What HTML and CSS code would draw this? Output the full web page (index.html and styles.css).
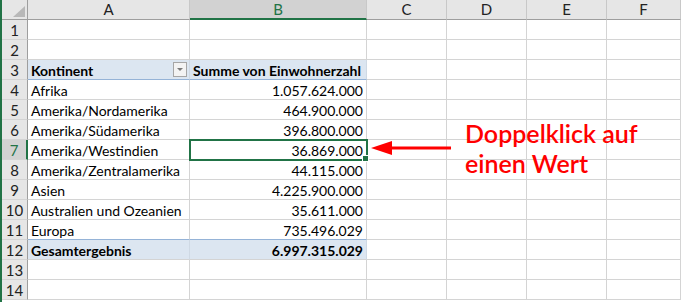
FILE: index.html
```html
<!DOCTYPE html>
<html lang="de">
<head>
  <meta charset="UTF-8">
  <title>Pivot - Einwohnerzahl</title>
  <link rel="stylesheet" href="styles.css">
</head>
<body>
  <div class="sheet">
    <!-- Spaltenköpfe -->
    <div class="corner"><span class="corner-tri"></span></div>
    <div class="col-head">A</div>
    <div class="col-head active">B</div>
    <div class="col-head">C</div>
    <div class="col-head">D</div>
    <div class="col-head">E</div>
    <div class="col-head">F</div>

    <div class="row-head">1</div><div class="cell"></div><div class="cell"></div><div class="cell"></div><div class="cell"></div><div class="cell"></div><div class="cell"></div>
    <div class="row-head">2</div><div class="cell"></div><div class="cell"></div><div class="cell"></div><div class="cell"></div><div class="cell"></div><div class="cell"></div>

    <div class="row-head">3</div>
    <div class="cell pivot-head label">Kontinent<span class="filter-btn"></span></div>
    <div class="cell pivot-head">Summe von Einwohnerzahl</div>
    <div class="cell"></div><div class="cell"></div><div class="cell"></div><div class="cell"></div>

    <div class="row-head">4</div><div class="cell">Afrika</div><div class="cell num">1.057.624.000</div><div class="cell"></div><div class="cell"></div><div class="cell"></div><div class="cell"></div>
    <div class="row-head">5</div><div class="cell">Amerika/Nordamerika</div><div class="cell num">464.900.000</div><div class="cell"></div><div class="cell"></div><div class="cell"></div><div class="cell"></div>
    <div class="row-head">6</div><div class="cell">Amerika/Südamerika</div><div class="cell num">396.800.000</div><div class="cell"></div><div class="cell"></div><div class="cell"></div><div class="cell"></div>
    <div class="row-head active">7</div><div class="cell">Amerika/Westindien</div><div class="cell num selected">36.869.000<span class="fill-handle"></span></div><div class="cell"></div><div class="cell"></div><div class="cell"></div><div class="cell"></div>
    <div class="row-head">8</div><div class="cell">Amerika/Zentralamerika</div><div class="cell num">44.115.000</div><div class="cell"></div><div class="cell"></div><div class="cell"></div><div class="cell"></div>
    <div class="row-head">9</div><div class="cell">Asien</div><div class="cell num">4.225.900.000</div><div class="cell"></div><div class="cell"></div><div class="cell"></div><div class="cell"></div>
    <div class="row-head">10</div><div class="cell">Australien und Ozeanien</div><div class="cell num">35.611.000</div><div class="cell"></div><div class="cell"></div><div class="cell"></div><div class="cell"></div>
    <div class="row-head">11</div><div class="cell">Europa</div><div class="cell num">735.496.029</div><div class="cell"></div><div class="cell"></div><div class="cell"></div><div class="cell"></div>

    <div class="row-head">12</div>
    <div class="cell pivot-total">Gesamtergebnis</div>
    <div class="cell pivot-total num">6.997.315.029</div>
    <div class="cell"></div><div class="cell"></div><div class="cell"></div><div class="cell"></div>

    <div class="row-head">13</div><div class="cell"></div><div class="cell"></div><div class="cell"></div><div class="cell"></div><div class="cell"></div><div class="cell"></div>
    <div class="row-head">14</div><div class="cell"></div><div class="cell"></div><div class="cell"></div><div class="cell"></div><div class="cell"></div><div class="cell"></div>

    <!-- Hinweis mit Pfeil -->
    <div class="note">
      <svg class="note-arrow" width="82" height="16" viewBox="0 0 82 16">
        <path d="M20 8 H80" stroke="#f00" stroke-width="3"/>
        <path d="M0 8 L21 1 L21 15 Z" fill="#f00"/>
      </svg>
      <div class="note-text">Doppelklick auf<br>einen Wert</div>
    </div>
  </div>
</body>
</html>
```

FILE: styles.css
```css
/* Grundgerüst der Tabelle */
body {
  margin: 0;
  font-family: Lato, "Liberation Sans", sans-serif;
  font-size: 14px;
  color: #000;
  background: #fff;
  overflow: hidden;
}

.sheet {
  position: relative;
  display: grid;
  grid-template-columns: 26px 162px 177px 80px 80px 80px 1fr;
  grid-auto-rows: 20px;
  border-left: 2px solid #217346;
  height: 302px;
}

.cell,
.row-head,
.col-head,
.corner {
  box-sizing: border-box;
  border-right: 1px solid #d4d4d4;
  border-bottom: 1px solid #d4d4d4;
  line-height: 19px;
  white-space: nowrap;
  overflow: visible;
}

.cell {
  padding: 1px 3px 0;
}

.cell.num {
  text-align: right;
}

/* Kopfzeilen */
.corner {
  position: relative;
  background: #e6e6e6;
  border-right-color: #9e9e9e;
  border-bottom-color: #9e9e9e;
}

.corner-tri {
  position: absolute;
  right: 2px;
  bottom: 2px;
  width: 0;
  height: 0;
  border-left: 12px solid transparent;
  border-bottom: 11px solid #b8b8b8;
}

.col-head {
  background: #e6e6e6;
  text-align: center;
  color: #222;
  font-size: 15px;
  border-right-color: #c8c8c8;
  border-bottom-color: #9e9e9e;
}

.col-head.active {
  background: #d2d2d2;
  color: #217346;
  border-bottom: 2px solid #217346;
}

.row-head {
  background: #e6e6e6;
  text-align: center;
  color: #222;
  font-size: 15px;
  border-right-color: #9e9e9e;
  border-bottom-color: #d4d4d4;
  padding-top: 1px;
}

.row-head.active {
  background: #d2d2d2;
  color: #217346;
  border-right: 2px solid #217346;
}

/* Pivot-Formatierung */
.pivot-head {
  position: relative;
  background: #dce6f1;
  font-weight: bold;
  border-bottom-color: #95b3d7;
  border-right-color: #cfd9e4;
}

.filter-btn {
  position: absolute;
  right: 2px;
  top: 2px;
  width: 14px;
  height: 15px;
  box-sizing: border-box;
  border: 1px solid #a6a6a6;
  background: #f3f3f3;
}

.filter-btn::after {
  content: "";
  position: absolute;
  left: 3px;
  top: 5px;
  border-left: 3px solid transparent;
  border-right: 3px solid transparent;
  border-top: 3px solid #7a7a7a;
}

.pivot-total {
  background: #dce6f1;
  font-weight: bold;
  margin-top: -1px;
  border-top: 1px solid #95b3d7;
  border-right-color: #cfd9e4;
}

/* Aktive Zelle */
.selected {
  position: relative;
  outline: 2px solid #217346;
  outline-offset: -1px;
  z-index: 1;
}

.fill-handle {
  position: absolute;
  right: -3px;
  bottom: -3px;
  width: 5px;
  height: 5px;
  background: #217346;
  border: 1px solid #fff;
}

/* Hinweis */
.note {
  position: absolute;
  left: 369px;
  top: 118px;
  display: flex;
  align-items: flex-start;
  gap: 12px;
}

.note-arrow {
  margin-top: 22px;
}

.note-text {
  color: #f00;
  font-size: 25px;
  font-weight: 600;
  line-height: 30px;
}
```
